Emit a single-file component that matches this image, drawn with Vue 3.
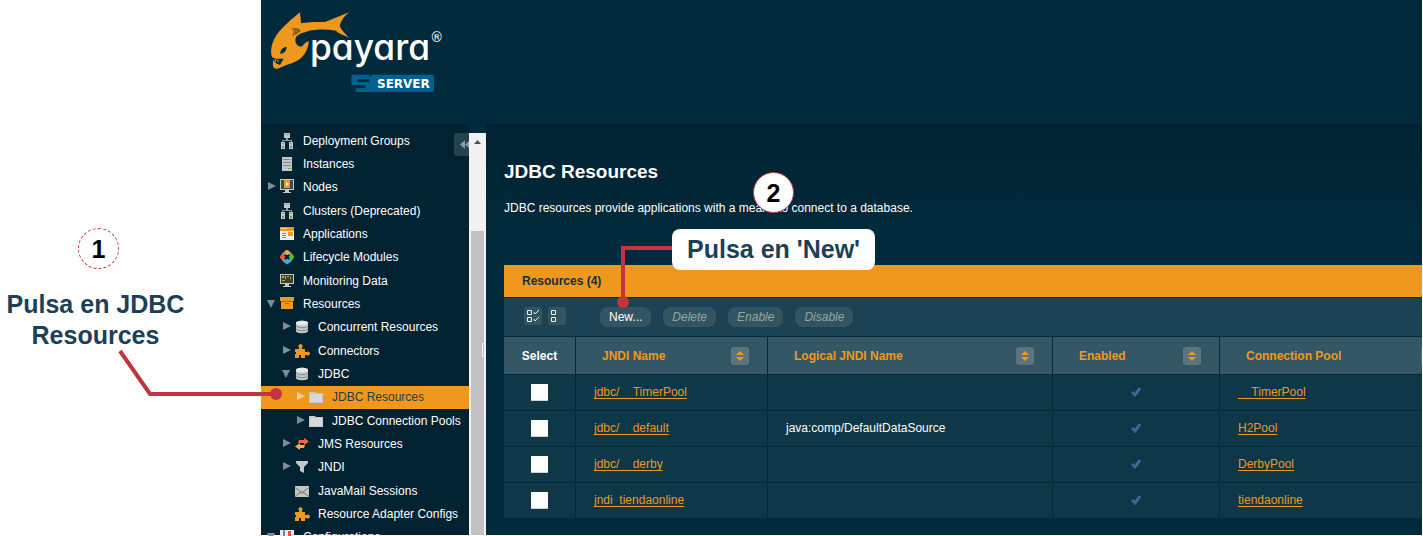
<script setup>
import { ref } from 'vue'

const G = '#c4c8ca'
const W = '#e6e8e9'
const O = '#f0981e'

const icons = {
  group: [
    ['#8d979c', 'M7 5h2v2h4v3h-1V8H4v2H3V7h4z'],
    [G, 'M5 0h6v5H5zM2 9h4v7H2zM10 9h4v7h-4z'],
    ['#93999c', 'M6 1h4v1H6zM3 10h2v1H3zM11 10h2v1h-2z'],
    ['#4fae3e', 'M3 13h2v2H3zM11 13h2v2h-2z'],
  ],
  server: [
    [G, 'M3 1h10v14H3z'],
    ['#7d878c', 'M4 3h8v1H4zM4 6h8v1H4zM4 9h8v1H4z'],
    ['#4fae3e', 'M9 12h3v1H9z'],
  ],
  node: [
    [G, 'M1 0h14v11H1zM6 11h4v2H6zM4 13h8v1H4z'],
    ['#3e4a50', 'M2 1h12v9H2z'],
    [O, 'M5 1h6v8H5z'],
    ['#ffffff', 'M7 3l3 2l-3 2z'],
  ],
  app: [
    ['#f3efe8', 'M1 1h14v13H1z'],
    [O, 'M1 1h14v4H1zM9 6h5v4H9z'],
    ['#f8cf95', 'M2 2h6v1H2z'],
    ['#7d878c', 'M3 7h4v1H3zM3 9h4v1H3zM3 11h4v1H3z'],
  ],
  cycle: [
    ['#8d979c', 'M8 2a6 6 0 1 0 .1 0zM8 4.500a3.500 3.500 0 1 1-.1 0z'],
    ['#f6a93a', 'M8 1a2.500 2.500 0 1 0 .1 0z'],
    ['#f25a2a', 'M3.500 5.500a2.500 2.500 0 1 0 .1 0z'],
    ['#36c936', 'M12.500 5.500a2.500 2.500 0 1 0 .1 0z'],
    ['#2bb5ea', 'M8 10a2.500 2.500 0 1 0 .1 0z'],
  ],
  monitor: [
    [G, 'M1 1h14v10H1zM6 11h4v2H6zM4 13h8v1H4z'],
    ['#3a3f38', 'M2 2h12v8H2z'],
    ['#c9b52c', 'M3 3h2v2H3zM6 3h1v3H6zM8 3h2v1H8zM11 4h1v2h-1zM3 7h3v1H3z'],
  ],
  box: [
    [O, 'M1 1h14v4H1zM2 6h12v7H2z'],
    ['#a8660a', 'M2 5h12v1H2zM6 7h4v1H6z'],
  ],
  db: [
    [G, 'M2 4c0-3 12-3 12 0v8c0 3-12 3-12 0z'],
    [W, 'M2 4c0-3 12-3 12 0s-12 3-12 0z'],
    ['#858d91', 'M2 6c1 3 11 3 12 0v1c-1 3-11 3-12 0zM2 9c1 3 11 3 12 0v1c-1 3-11 3-12 0z'],
  ],
  puzzle: [
    [O, 'M1 6h4V4.500a2 2 0 1 1 3 0V6h3v3h1.500a2 2 0 1 1 0 3H11v3H7v-3H5v3H1v-4h1V9H1z'],
  ],
  folder: [
    [G, 'M1 3h6l1 1h7v10H1z'],
    ['#d6d9da', 'M2 5h12v8H2z'],
  ],
  arrows: [
    ['#f2683c', 'M5 4h5V2l5 3.500L10 9V7H4z'],
    ['#f6ac55', 'M11 9H6V7l-5 3.500L6 14v-2h4z'],
  ],
  funnel: [[G, 'M2 2h12v2L10 8v6l-4-2V8L2 4z']],
  mail: [
    ['#c9c5c2', 'M1 3h14v11H1z'],
    ['#858482', 'M1 4l7 5 7-5v1L10 9l5 4v1L9 10l-1 1-1-1-6 4v-1l5-4-5-4z'],
  ],
  config: [
    [W, 'M1 1h14v14H1z'],
    ['#7d878c', 'M4 1h2v6H4z'],
    ['#e5532a', 'M9 2h3v8H9z'],
  ],
}

const tree = [
  { label: 'Deployment Groups', icon: 'group', level: 0 },
  { label: 'Instances', icon: 'server', level: 0 },
  { label: 'Nodes', icon: 'node', level: 0, arrow: 'closed' },
  { label: 'Clusters (Deprecated)', icon: 'group', level: 0 },
  { label: 'Applications', icon: 'app', level: 0 },
  { label: 'Lifecycle Modules', icon: 'cycle', level: 0 },
  { label: 'Monitoring Data', icon: 'monitor', level: 0 },
  { label: 'Resources', icon: 'box', level: 0, arrow: 'open' },
  { label: 'Concurrent Resources', icon: 'db', level: 1, arrow: 'closed' },
  { label: 'Connectors', icon: 'puzzle', level: 1, arrow: 'closed' },
  { label: 'JDBC', icon: 'db', level: 1, arrow: 'open' },
  { label: 'JDBC Resources', icon: 'folder', level: 2, arrow: 'closed', selected: true },
  { label: 'JDBC Connection Pools', icon: 'folder', level: 2, arrow: 'closed' },
  { label: 'JMS Resources', icon: 'arrows', level: 1, arrow: 'closed' },
  { label: 'JNDI', icon: 'funnel', level: 1, arrow: 'closed' },
  { label: 'JavaMail Sessions', icon: 'mail', level: 1 },
  { label: 'Resource Adapter Configs', icon: 'puzzle', level: 1 },
  { label: 'Configurations', icon: 'config', level: 0, arrow: 'open' },
]

const columns = ['JNDI Name', 'Logical JNDI Name', 'Enabled', 'Connection Pool']

const rows = ref([
  { name: 'jdbc/__TimerPool', logical: '', pool: '__TimerPool', checked: false },
  { name: 'jdbc/__default', logical: 'java:comp/DefaultDataSource', pool: 'H2Pool', checked: false },
  { name: 'jdbc/__derby', logical: '', pool: 'DerbyPool', checked: false },
  { name: 'jndi_tiendaonline', logical: '', pool: 'tiendaonline', checked: false },
])

function selectAll(value) {
  rows.value.forEach((row) => (row.checked = value))
}
</script>

<template>
  <div class="guide">
    <aside class="step">
      <span class="badge dashed">1</span>
      <p class="step-text">Pulsa en JDBC Resources</p>
    </aside>

    <div class="console">
      <header class="banner">
        <svg class="logo" viewBox="0 0 600 330" role="img" aria-label="Payara Server">
          <path fill="#f0981e" d="M117 37L120 70C146 65 170 66 192 66L264 37C248 50 239 64 236 79C244 93 254 103 264 113C250 105 235 103 225 92C190 86 150 88 132 97C113 101 102 110 103 122C104 135 115 141 124 139C128 131 136 126 144 124C139 158 124 180 88 191C70 196 58 203 50 206C45 206 40 204 38 203C35 198 36 190 36 180L45 190L57 195L68 176L45 176L33 172C29 160 30 146 33 134C45 95 78 70 117 37Z" />
          <path fill="#012b3c" d="M57 161C59 149 67 141 77 141C76 154 69 161 57 161Z" />
          <path fill="#f0981e" d="M40 178l6 0-2 10zM48 181l5-1-1 9z" />
          <path fill="none" stroke="#012b3c" stroke-width="2" d="M92 84q12 8 3 24M97 84q12 8 4 21M102 84q11 7 4 19M107 85q9 6 4 14M112 86q6 5 3 10" />
          <text class="brand" x="147" y="181">payara</text>
          <text class="reg" x="507" y="125">®</text>
          <path fill="#00618f" d="M275 224h50v14h-35v8h35v-14l8-8h180q6 0 6 6v40q0 6-6 6H288q-4 0-4-4v-7h29v-9h-36q-6 0-6-6v-22q0-4 4-4z" />
          <text class="product" x="348" y="264">SERVER</text>
        </svg>
      </header>

      <div class="work">
        <nav class="sidebar" aria-label="Tree">
          <ul class="tree">
            <li v-for="item in tree" :key="item.label" :class="['node', 'level-' + item.level, { selected: item.selected }]">
              <button v-if="item.arrow" class="arrow" type="button" :aria-label="'Toggle ' + item.label">
                <svg viewBox="0 0 13 16"><path :d="item.arrow === 'open' ? 'M1 4h8l-4 8z' : 'M2 3l8 4-8 4z'" /></svg>
              </button>
              <span v-else class="arrow"></span>
              <a href="#" class="item">
                <svg class="icon" viewBox="0 0 16 16" aria-hidden="true">
                  <path v-for="(part, i) in icons[item.icon]" :key="i" :fill="part[0]" :d="part[1]" fill-rule="evenodd" />
                </svg>
                <span>{{ item.label }}</span>
              </a>
            </li>
          </ul>
          <button class="collapse" type="button" aria-label="Collapse tree">
            <svg viewBox="0 0 22 23"><path d="M11 7v9l-5-4.500zM16 7v9l-5-4.500z" /></svg>
          </button>
        </nav>

        <div class="scroll">
          <svg class="scroll-up" viewBox="0 0 17 17"><path d="M5 11l3.500-4 3.500 4z" /></svg>
          <div class="thumb"></div>
          <span class="grip"></span>
        </div>

        <main class="main">
          <h1>JDBC Resources</h1>
          <p class="intro">JDBC resources provide applications with a means to connect to a database.</p>

          <section class="panel">
            <h2>Resources (4)</h2>
            <div class="toolbar">
              <button class="tool" type="button" aria-label="Select all" @click="selectAll(true)">
                <svg viewBox="0 0 18 18"><path class="sq" d="M3.500 3.500h4v4h-4zM3.500 10.500h4v4h-4z" /><path class="sq" d="M10 5l1 2 4-4M10 12l1 2 4-4" /></svg>
              </button>
              <button class="tool" type="button" aria-label="Deselect all" @click="selectAll(false)">
                <svg viewBox="0 0 18 18"><path class="sq" d="M3.500 3.500h4v4h-4zM3.500 10.500h4v4h-4z" /></svg>
              </button>
              <button class="action first" type="button">New...</button>
              <button class="action" type="button" disabled>Delete</button>
              <button class="action" type="button" disabled>Enable</button>
              <button class="action" type="button" disabled>Disable</button>
            </div>
            <table>
              <colgroup>
                <col class="c-select" />
                <col class="c-name" />
                <col class="c-logical" />
                <col class="c-enabled" />
                <col />
              </colgroup>
              <thead>
                <tr>
                  <th class="select" scope="col">Select</th>
                  <th v-for="column in columns" :key="column" scope="col">
                    <div class="head">
                      <a href="#">{{ column }}</a>
                      <button class="sort" type="button" :aria-label="'Sort by ' + column">
                        <svg viewBox="0 0 18 18"><path d="M9 4l4 4H5zM9 14l4-4H5z" /></svg>
                      </button>
                    </div>
                  </th>
                </tr>
              </thead>
              <tbody>
                <tr v-for="row in rows" :key="row.name">
                  <td class="select"><input v-model="row.checked" type="checkbox" :aria-label="'Select ' + row.name" /></td>
                  <td><a href="#">{{ row.name }}</a></td>
                  <td>{{ row.logical }}</td>
                  <td class="enabled">
                    <svg viewBox="0 0 10 10" role="img" aria-label="Enabled"><path d="M1 5l3 3 5-7" /></svg>
                  </td>
                  <td><a href="#">{{ row.pool }}</a></td>
                </tr>
              </tbody>
            </table>
          </section>
        </main>
      </div>
    </div>

    <svg class="connectors" aria-hidden="true">
      <path d="M120 351L150 394H277" />
      <path d="M674 248H623V302" />
      <circle cx="276" cy="394" r="6" />
      <circle cx="623" cy="302" r="6" />
    </svg>
    <span class="badge second">2</span>
    <p class="callout">Pulsa en 'New'</p>
  </div>
</template>

<style>
body {
  margin: 0;
  background: #fff;
}
</style>

<style scoped>
.guide {
  position: relative;
  display: flex;
  box-sizing: border-box;
  height: 100vh;
  padding: 0 1px 1px 0;
  overflow: hidden;
  font: 12px/16px "Liberation Sans", Arial, sans-serif;
}
button {
  padding: 0;
  border: 0;
  font: inherit;
}
svg {
  display: block;
}
.step {
  flex: none;
  box-sizing: border-box;
  width: 261px;
  padding: 228px 70px 0 0;
}
.badge {
  display: flex;
  align-items: center;
  justify-content: center;
  box-sizing: border-box;
  width: 41px;
  height: 41px;
  border: 1px solid #c4343f;
  border-radius: 50%;
  background: #fff;
  color: #000;
  font-weight: bold;
  font-size: 25px;
}
.badge.dashed {
  margin: 0 0 20px 78px;
  border-style: dashed;
}
.badge.second {
  position: absolute;
  left: 753px;
  top: 172px;
}
.step-text {
  margin: 0;
  color: #1d3f58;
  font-weight: bold;
  font-size: 25px;
  line-height: 31px;
  text-align: center;
}
.callout {
  position: absolute;
  left: 672px;
  top: 229px;
  margin: 0;
  padding: 5px 15px;
  border-radius: 8px;
  background: #fff;
  color: #1d3f58;
  font-weight: bold;
  font-size: 25px;
  line-height: 31px;
}
.connectors {
  position: absolute;
  inset: 0;
  width: 100%;
  height: 100%;
  fill: #c4343f;
  pointer-events: none;
}
.connectors path {
  fill: none;
  stroke: #c4343f;
  stroke-width: 4;
}
.console {
  flex: 1;
  display: flex;
  flex-direction: column;
  min-width: 0;
  background: #012b3c;
}
.banner {
  flex: none;
  height: 124px;
}
.logo {
  width: 200px;
  height: 110px;
}
.brand {
  fill: #fff;
  font: 500 106px Inter, sans-serif;
  font-feature-settings: "cv11" 1;
}
.reg {
  fill: #fff;
  font: 400 40px "DejaVu Sans", sans-serif;
}
.product {
  fill: #fff;
  font: 700 36px "DejaVu Sans", sans-serif;
}
.work {
  flex: 1;
  display: flex;
  min-height: 0;
}
.sidebar {
  position: relative;
  flex: none;
  width: 208px;
  padding-top: 5px;
  background: #002231;
}
.tree {
  display: grid;
  grid-auto-rows: 1fr;
  height: 420px;
  margin: 0;
  padding: 0;
  list-style: none;
}
.node {
  display: flex;
  align-items: center;
  padding-left: 5px;
}
.level-1 {
  padding-left: 20px;
}
.level-2 {
  padding-left: 34px;
}
.selected {
  background: #f0981e;
}
.arrow {
  flex: none;
  width: 13px;
  height: 16px;
  background: none;
}
.arrow path {
  fill: #7c8d95;
}
.selected .arrow path {
  fill: #f9cf93;
}
.item {
  display: flex;
  align-items: center;
  gap: 8px;
  color: #fff;
  text-decoration: none;
  white-space: nowrap;
}
.selected .item {
  color: #243d42;
}
.icon {
  width: 16px;
  height: 16px;
}
.collapse {
  position: absolute;
  left: 193px;
  top: 9px;
  width: 22px;
  height: 23px;
  border-radius: 3px;
  background: #24424f;
}
.collapse path {
  fill: #8b9ca4;
}
.scroll {
  position: relative;
  flex: none;
  display: flex;
  flex-direction: column;
  align-items: center;
  width: 17px;
  margin-top: 9px;
  background: #f1f1f1;
}
.scroll-up {
  flex: none;
  width: 17px;
  height: 17px;
  margin-bottom: 81px;
  fill: #505050;
}
.thumb {
  flex: 1;
  width: 13px;
  background: #c1c1c1;
}
.grip {
  position: absolute;
  right: 0;
  top: 210px;
  box-sizing: border-box;
  width: 4px;
  height: 14px;
  border: 1px solid #f1f1f1;
  border-right: 0;
}
.main {
  flex: 1;
  min-width: 0;
  padding: 36px 0 0 18px;
  overflow: hidden;
  background: linear-gradient(#002231, #012b3c 120px);
  color: #fff;
}
h1 {
  margin: 0 0 16px;
  font-size: 19px;
  line-height: 24px;
}
.intro {
  margin: 0 0 49px;
}
h2 {
  margin: 0 0 1px;
  padding: 0 18px;
  background: #f0981e;
  color: #0d303d;
  font-size: 12px;
  line-height: 32px;
}
.toolbar {
  display: flex;
  align-items: center;
  box-sizing: border-box;
  height: 38px;
  margin-bottom: 1px;
  padding-left: 20px;
  background: #1c4354;
}
.tool {
  width: 18px;
  height: 18px;
  margin: 0 6px 2px 0;
  border-radius: 3px;
  background: #335562;
}
.sq {
  fill: none;
  stroke: #e8ecee;
  stroke-width: 1;
}
.action {
  height: 20px;
  margin-right: 12px;
  padding: 0 9px;
  border-radius: 8px;
  background: #335562;
  color: #fff;
}
.action.first {
  margin-left: 28px;
}
.action:disabled {
  color: #93a4ab;
  font-style: italic;
}
table {
  width: calc(100% + 36px);
  table-layout: fixed;
  border-collapse: separate;
  border-spacing: 0;
}
.c-select {
  width: 72px;
}
.c-name {
  width: 192px;
}
.c-logical {
  width: 285px;
}
.c-enabled {
  width: 167px;
}
th,
td {
  box-sizing: border-box;
  padding: 0 18px;
  border-right: 1px solid #012b3c;
  border-bottom: 1px solid #012b3c;
  text-align: left;
}
th {
  height: 38px;
  background: #335764;
}
td {
  height: 36px;
  padding-bottom: 2px;
  background: #0e3747;
}
.select {
  padding: 0;
  text-align: center;
}
.head {
  display: flex;
  align-items: center;
  justify-content: space-between;
  padding-left: 8px;
}
.head a {
  text-decoration: none;
}
th a,
td a {
  color: #f0981e;
}
td a {
  text-decoration-skip-ink: none;
  text-decoration-thickness: 1px;
  text-underline-offset: 2px;
}
.sort {
  width: 18px;
  height: 18px;
  border-radius: 3px;
  background: #5b7480;
}
.sort path {
  fill: #f0981e;
}
input {
  display: block;
  width: 17px;
  height: 17px;
  margin: 0 auto;
  appearance: none;
  background: #fff;
  box-shadow: inset 0 -1px 1px #ccc;
}
.select input:checked {
  background: #f0981e;
}
.enabled svg {
  width: 10px;
  height: 10px;
  margin: 0 auto;
  fill: none;
  stroke: #366a9c;
  stroke-width: 3;
}
</style>
